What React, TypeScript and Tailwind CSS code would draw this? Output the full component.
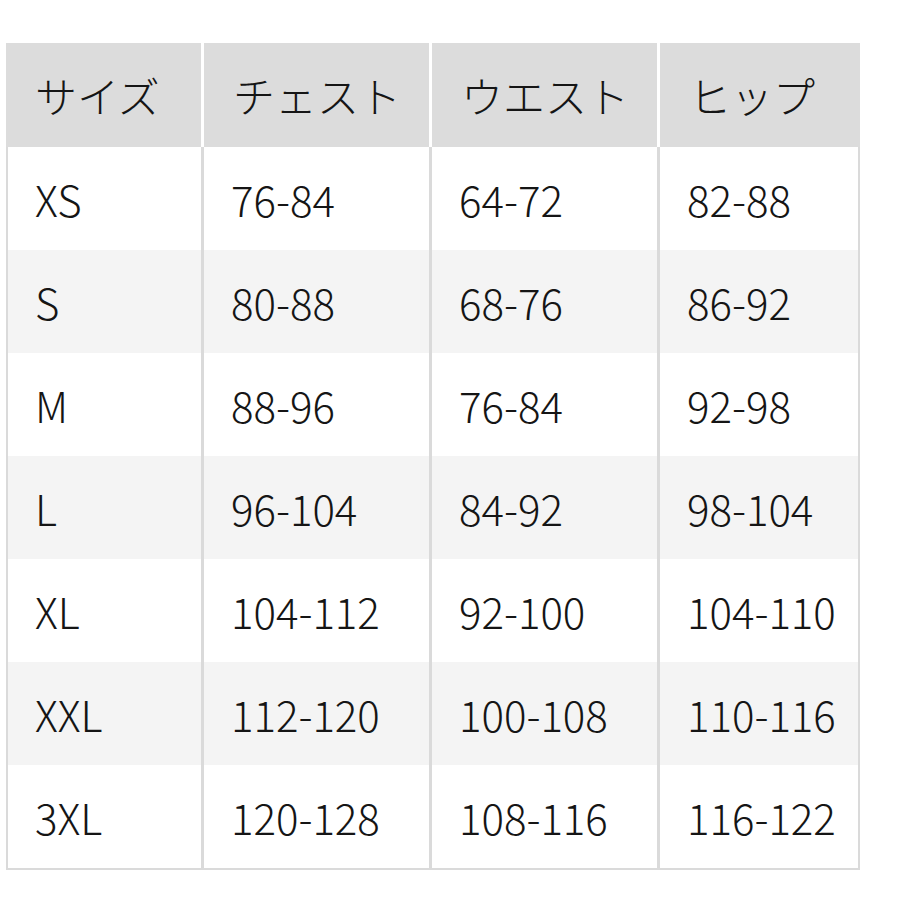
import React from "react";

const headers = ["サイズ", "チェスト", "ウエスト", "ヒップ"];
const rows = [
  ["XS", "76-84", "64-72", "82-88"],
  ["S", "80-88", "68-76", "86-92"],
  ["M", "88-96", "76-84", "92-98"],
  ["L", "96-104", "84-92", "98-104"],
  ["XL", "104-112", "92-100", "104-110"],
  ["XXL", "112-120", "100-108", "110-116"],
  ["3XL", "120-128", "108-116", "116-122"],
];

export default function App() {
  return (
    <div
      className="w-[900px] h-[900px] bg-white pt-[43px] pl-[6px] text-[#151515] font-light"
      style={{ fontFamily: '"Noto Sans CJK JP", "Noto Sans", sans-serif' }}
    >
      <div className="w-[854px]">
        <div className="grid grid-cols-[195px_225px_225px_200px] gap-x-[3px] bg-white">
          {headers.map((h) => (
            <div
              key={h}
              className="h-[104px] bg-[#dcdcdc] flex items-center pl-[29px] text-[42px] leading-none"
            >
              {h}
            </div>
          ))}
        </div>
        <div className="border-x-2 border-b-2 border-[#dadada]">
          {rows.map((r, i) => (
            <div
              key={r[0]}
              className="grid grid-cols-[193px_225px_225px_198px] gap-x-[3px] bg-[#dadada]"
            >
              {r.map((c, j) => (
                <div
                  key={j}
                  className={`h-[103px] flex items-center pl-[27px] text-[42px] leading-none proportional-nums ${
                    i % 2 === 1 ? "bg-[#f4f4f4]" : "bg-white"
                  }`}
                >
                  {c}
                </div>
              ))}
            </div>
          ))}
        </div>
      </div>
    </div>
  );
}
